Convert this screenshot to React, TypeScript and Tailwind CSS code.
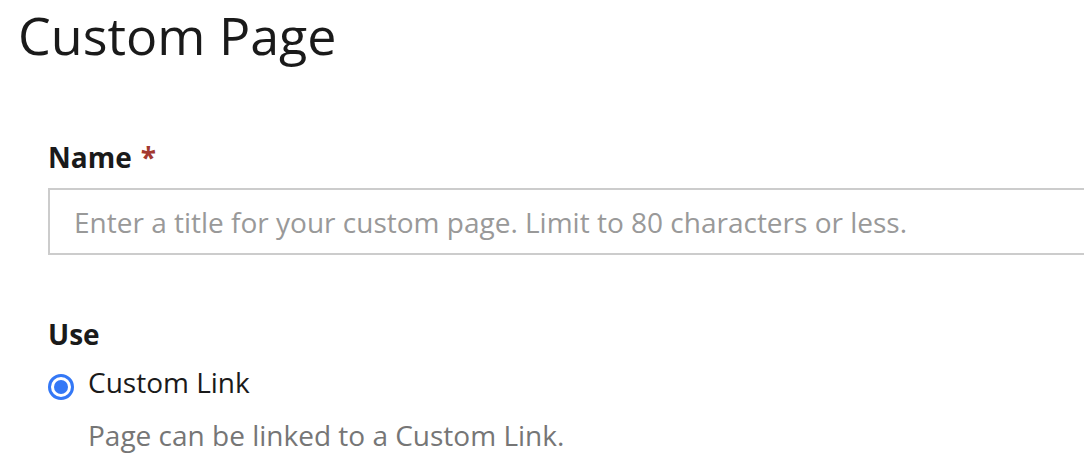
export default function App() {
  return (
    <div className="min-h-screen overflow-hidden bg-white font-['Open_Sans',sans-serif] text-[#1a1a1a]">
      <div className="pl-[18px]">
        <h1 className="text-[52px] leading-[70px] font-normal">Custom Page</h1>
      </div>

      <div className="pl-[48px] pt-[68px]">
        {/* Name field */}
        <label className="flex items-center text-[28px] leading-[38px] font-bold">
          Name
          <span className="ml-[9px] text-[#a3392f]">*</span>
        </label>
        <input
          type="text"
          placeholder="Enter a title for your custom page. Limit to 80 characters or less."
          className="mt-[12px] block w-[1100px] h-[67px] border-2 border-[#cccccc] px-[24px] text-[28px] placeholder:text-[#999999] outline-none"
        />

        {/* Use */}
        <div className="pt-[60px]">
          <div className="text-[28px] leading-[38px] font-bold">Use</div>
          <div className="mt-[10px] flex items-start gap-[14px]">
            <span className="mt-[11px] flex h-[26px] w-[26px] items-center justify-center rounded-full border-[3px] border-[#3478f6]">
              <span className="h-[14px] w-[14px] rounded-full bg-[#3478f6]" />
            </span>
            <span className="text-[28px] leading-[38px]">Custom Link</span>
          </div>
          <div className="mt-[15px] pl-[40px] text-[28px] leading-[38px] text-[#767676]">
            Page can be linked to a Custom Link.
          </div>
        </div>
      </div>
    </div>
  );
}
